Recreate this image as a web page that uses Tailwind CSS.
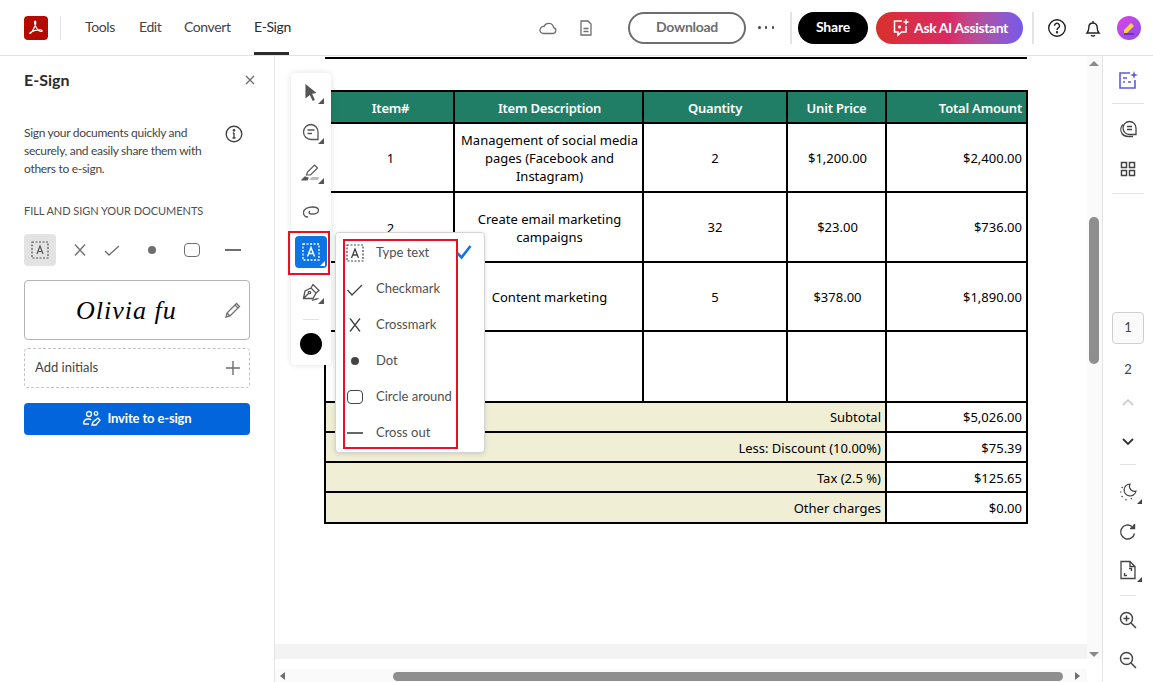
<!DOCTYPE html>
<html lang="en">
<head>
    <meta charset="UTF-8">
    <title>E-Sign</title>
    <script src="https://cdn.jsdelivr.net/npm/@tailwindcss/browser@4"></script>
</head>
<body class="w-[1153px] h-[682px] overflow-hidden bg-white font-['Lato','Noto_Sans',sans-serif] text-[#2c2c2c] flex flex-col">
    <!-- top bar -->
    <header class="h-[56px] shrink-0 border-b border-[#e3e3e3] flex items-center pl-[24px]">
        <div class="w-[24px] h-[24px] rounded-[4px] bg-[#b30b00] flex items-center justify-center">
            <svg width="17" height="17" viewBox="0 0 17 17" fill="none" stroke="#fff" stroke-width="1.2"><path d="M2 14.5c2-1 4-5 5.5-9 .5-2 .3-3.3-.4-3.3-.9 0-.8 2.500 1 6 1.500 2.600 3.500 4.300 5 4.300 1.500 0 1.500-1.500-.5-1.600-3-.2-7 .8-9.500 2.200-1 .6-1.500 1.200-1.100 1.400z"/></svg>
        </div>
        <div class="w-px h-[24px] bg-[#e3e3e3] ml-[12px]"></div>
        <nav class="flex h-full text-[14px] tracking-[-0.4px] text-[#444] ml-[24px]">
            <a class="leading-[54px] w-[54px]">Tools</a>
            <a class="leading-[54px] w-[45px]">Edit</a>
            <a class="leading-[54px] w-[70px]">Convert</a>
            <a class="leading-[54px] h-full w-[35px] border-b-[3px] border-[#2c2c2c] text-[#2c2c2c] whitespace-nowrap">E-Sign</a>
        </nav>
        <div class="flex items-center ml-[249px]">
            <svg width="20" height="20" viewBox="0 0 20 20" fill="none" stroke="#6e6e6e" stroke-width="1.300"><path d="M5 15.500h10a3 3 0 0 0 .6-5.900A5 5 0 0 0 6 8.500a3.500 3.500 0 0 0-1 7z"/></svg>
            <svg class="ml-[18px]" width="20" height="20" viewBox="0 0 20 20" fill="none" stroke="#6e6e6e" stroke-width="1.300"><path d="M5 3h7l3 3v11H5zM7.500 10.500h5M7.500 13.500h5"/></svg>
            <button class="ml-[32px] w-[118px] h-[32px] rounded-full border-2 border-[#6e6e6e] text-[14px] tracking-[-0.3px] leading-[26px] pb-[2px] font-bold text-[#6e6e6e]">Download</button>
            <span class="ml-[12px] w-[16px] flex justify-between">
                <i class="w-[2.500px] h-[2.500px] rounded-full bg-[#444]"></i><i class="w-[2.500px] h-[2.500px] rounded-full bg-[#444]"></i><i class="w-[2.500px] h-[2.500px] rounded-full bg-[#444]"></i>
            </span>
            <div class="w-[2px] h-[32px] bg-[#e3e3e3] ml-[16px]"></div>
            <button class="ml-[6px] w-[70px] h-[32px] pb-[2px] rounded-full bg-black text-white text-[14px] tracking-[-0.2px] font-bold">Share</button>
            <button class="ml-[8px] w-[147px] h-[32px] pb-[1px] rounded-full bg-gradient-to-r from-[#d9302a] via-[#d92a63] to-[#7457ee] text-white text-[14px] tracking-[-0.4px] font-bold flex items-center justify-center gap-[3px]">
                <svg width="20" height="20" viewBox="0 0 20 20" fill="none" stroke="#fff" stroke-width="1.500"><path d="M11 4H3.500v11H7v3l3.500-3H15V9"/><path d="M15 1.500l.9 2.600 2.600.9-2.600.9-.9 2.600-.9-2.600-2.600-.9 2.600-.9z" fill="#fff" stroke="none"/><path d="M8.500 8.500v3M7 10h3"/></svg>
                Ask AI Assistant
            </button>
            <div class="w-[2px] h-[32px] bg-[#e3e3e3] ml-[9px]"></div>
            <svg class="ml-[13px]" width="20" height="20" viewBox="0 0 20 20" fill="none" stroke="#222" stroke-width="1.400"><circle cx="10" cy="10" r="8.300"/><path d="M7.500 7.800a2.500 2.500 0 1 1 3.800 2.100c-.9.600-1.300 1-1.300 2"/><circle cx="10" cy="14.300" r=".5" fill="#222"/></svg>
            <svg class="ml-[16px]" width="20" height="20" viewBox="0 0 20 20" fill="none" stroke="#222" stroke-width="1.400"><path d="M4 15h12c-1.300-1.300-1.800-2.500-1.800-5.500 0-2.600-1.700-4.500-4.200-4.500S5.800 6.900 5.800 9.500C5.800 12.500 5.300 13.700 4 15zM8.200 17a2 2 0 0 0 3.600 0M10 3v2"/></svg>
            <div class="ml-[14px] w-[24px] h-[24px] rounded-full bg-gradient-to-br from-[#e040e8] to-[#8a4be8] flex items-center justify-center">
                <svg width="16" height="16" viewBox="0 0 16 16"><path d="M3 10l7-7 3 3-7 7H3z" fill="#f5d442"/><path d="M3 14h10" stroke="#5a2bb0" stroke-width="1.500"/></svg>
            </div>
        </div>
    </header>

    <div class="flex flex-1 min-h-0">
        <!-- left panel -->
        <aside class="w-[275px] shrink-0 border-r border-[#e3e3e3] px-[24px] pt-[13px]">
            <div class="flex items-center justify-between h-[22px]">
                <h1 class="text-[16px] font-bold">E-Sign</h1>
                <svg class="-mr-[5px]" width="10" height="10" viewBox="0 0 10 10" stroke="#6e6e6e" stroke-width="1.300"><path d="M1 1l8 8M9 1l-8 8"/></svg>
            </div>
            <div class="flex justify-between mt-[33px] pr-[7px]">
                <p class="text-[12px] tracking-[-0.3px] leading-[18px] text-[#444] w-[185px]">Sign your documents quickly and securely, and easily share them with others to e-sign.</p>
                <svg class="mt-[1px]" width="18" height="18" viewBox="0 0 18 18" fill="none" stroke="#444" stroke-width="1.400"><circle cx="9" cy="9" r="7.800"/><path d="M9 8v5M7.500 13h3M7.800 8H9" /><circle cx="9" cy="5.300" r=".7" fill="#444"/></svg>
            </div>
            <h2 class="text-[11px] tracking-[-0.05px] text-[#505050] mt-[25px] leading-[16px]">FILL AND SIGN YOUR DOCUMENTS</h2>
            <div class="flex items-center mt-[15px]">
                <div class="w-[32px] h-[32px] rounded-[4px] bg-[#e3e3e3] flex items-center justify-center">
                    <svg width="18" height="18" viewBox="0 0 18 18" fill="none"><rect x="1" y="1" width="16" height="16" stroke="#555" stroke-width="1.200" stroke-dasharray="2 1.500"/><path d="M6 13l3-8 3 8M7 10.500h4" stroke="#555" stroke-width="1.200"/></svg>
                </div>
                <svg class="ml-[16px]" width="16" height="16" viewBox="0 0 16 16" stroke="#6e6e6e" stroke-width="1.300" fill="none"><path d="M3 2.500l10 11M13 2.500l-10 11"/></svg>
                <svg class="ml-[16px]" width="16" height="16" viewBox="0 0 16 16" stroke="#6e6e6e" stroke-width="1.300" fill="none"><path d="M1 9l4 4 10-9"/></svg>
                <span class="ml-[28px] w-[8px] h-[8px] rounded-full bg-[#6e6e6e]"></span>
                <span class="ml-[28px] w-[16px] h-[14px] rounded-[4px] border-[1.500px] border-[#6e6e6e]"></span>
                <span class="ml-[25px] w-[16px] h-[1.500px] bg-[#6e6e6e]"></span>
            </div>
            <div class="mt-[14px] h-[60px] rounded-[4px] border border-[#b3b3b3] flex items-center relative">
                <span class="ml-[51px] font-['Liberation_Serif',serif] italic text-[26px] tracking-[1px] text-black">Olivia fu</span>
                <svg class="ml-auto mr-[7px]" width="18" height="18" viewBox="0 0 18 18" fill="none" stroke="#6e6e6e" stroke-width="1.300"><path d="M2 16l1-4L12.500 2.500l3 3L6 15zM3 12l3 3M11 4l3 3"/></svg>
            </div>
            <div class="mt-[8px] h-[40px] rounded-[4px] border border-dashed border-[#c4c4c4] flex items-center justify-between pl-[10px] pr-[9px]">
                <span class="text-[13px] text-[#444]">Add initials</span>
                <svg width="14" height="14" viewBox="0 0 14 14" stroke="#6e6e6e" stroke-width="1.400"><path d="M7 0v14M0 7h14"/></svg>
            </div>
            <button class="mt-[15px] w-full h-[32px] rounded-[4px] bg-[#0265dc] text-white text-[13px] tracking-[-0.15px] font-bold flex items-center justify-center gap-[5px]">
                <svg width="20" height="18" viewBox="0 0 20 18" fill="none" stroke="#fff" stroke-width="1.300"><circle cx="7" cy="4" r="2.500"/><circle cx="14" cy="3.500" r="1.800"/><path d="M1.500 14c0-3 2-5 5-5 1 0 2 .2 2.800.7M1.500 14H7"/><path d="M10 15l1-3 5-4 2 2-4 5z"/></svg>
                Invite to e-sign
            </button>
        </aside>

        <!-- document viewer -->
        <main class="flex-1 min-w-0 flex flex-col relative">
            <div class="flex-1 min-h-0 flex">
                <div class="flex-1 min-w-0 flex flex-col overflow-hidden">
                    <div class="flex-1 pl-[49px] font-['Noto_Sans',sans-serif] text-black text-[13px]">
                        <div class="ml-[1px] w-[702px] h-[2px] bg-black mt-[1px]"></div>
                        <table class="mt-[31px] w-[702px] table-fixed border-collapse">
                            <colgroup><col class="w-[129px]"><col class="w-[189px]"><col class="w-[144px]"><col class="w-[99px]"><col class="w-[141px]"></colgroup>
                            <thead>
                                <tr class="h-[32px] bg-[#217e66] text-white font-semibold tracking-[-0.2px]">
                                    <th class="border-2 border-black font-semibold pt-[3px] pl-[2px]">Item#</th>
                                    <th class="border-2 border-black font-semibold pt-[3px] pl-[2px]">Item Description</th>
                                    <th class="border-2 border-black font-semibold pt-[3px]">Quantity</th>
                                    <th class="border-2 border-black font-semibold pt-[3px]">Unit Price</th>
                                    <th class="border-2 border-black font-semibold pt-[3px] text-right pr-[4px]">Total Amount</th>
                                </tr>
                            </thead>
                            <tbody class="text-center leading-[18px]">
                                <tr class="h-[69px]">
                                    <td class="border-2 border-black pl-[2px]">1</td>
                                    <td class="border-2 border-black pl-[5px] pr-[3px]">Management of social media pages (Facebook and Instagram)</td>
                                    <td class="border-2 border-black">2</td>
                                    <td class="border-2 border-black pl-[2px]">$1,200.00</td>
                                    <td class="border-2 border-black text-right pr-[4px]">$2,400.00</td>
                                </tr>
                                <tr class="h-[70px]">
                                    <td class="border-2 border-black pl-[2px] pt-[2px]">2</td>
                                    <td class="border-2 border-black pl-[18px] pr-[16px] pt-[2px]">Create email marketing campaigns</td>
                                    <td class="border-2 border-black">32</td>
                                    <td class="border-2 border-black pl-[2px]">$23.00</td>
                                    <td class="border-2 border-black text-right pr-[4px]">$736.00</td>
                                </tr>
                                <tr class="h-[69px]">
                                    <td class="border-2 border-black"></td>
                                    <td class="border-2 border-black pl-[2px]">Content marketing</td>
                                    <td class="border-2 border-black">5</td>
                                    <td class="border-2 border-black pl-[2px]">$378.00</td>
                                    <td class="border-2 border-black text-right pr-[4px]">$1,890.00</td>
                                </tr>
                                <tr class="h-[71px]">
                                    <td class="border-2 border-black"></td>
                                    <td class="border-2 border-black"></td>
                                    <td class="border-2 border-black"></td>
                                    <td class="border-2 border-black"></td>
                                    <td class="border-2 border-black"></td>
                                </tr>
                                <tr class="h-[30px]">
                                    <td colspan="4" class="border-2 border-black bg-[#f0efd6] text-right pr-[4px]">Subtotal</td>
                                    <td class="border-2 border-black text-right pr-[4px]">$5,026.00</td>
                                </tr>
                                <tr class="h-[30px]">
                                    <td colspan="4" class="border-2 border-black bg-[#f0efd6] text-right pr-[4px] pt-[2px]">Less: Discount (10.00%)</td>
                                    <td class="border-2 border-black text-right pr-[4px] pt-[2px]">$75.39</td>
                                </tr>
                                <tr class="h-[30px]">
                                    <td colspan="4" class="border-2 border-black bg-[#f0efd6] text-right pr-[4px] pt-[2px]">Tax (2.5 %)</td>
                                    <td class="border-2 border-black text-right pr-[4px] pt-[2px]">$125.65</td>
                                </tr>
                                <tr class="h-[31px]">
                                    <td colspan="4" class="border-2 border-black bg-[#f0efd6] text-right pr-[4px]">Other charges</td>
                                    <td class="border-2 border-black text-right pr-[4px]">$0.00</td>
                                </tr>
                            </tbody>
                        </table>
                    </div>
                    <div class="h-[15px] shrink-0 bg-[#f3f3f3]"></div>
                </div>
                <!-- vertical scrollbar -->
                <div class="w-[15px] shrink-0 bg-[#fafafa] relative">
                    <span class="absolute left-[2px] top-[5px] w-0 h-0 border-x-[5px] border-x-transparent border-b-[5px] border-b-[#8a8a8a]"></span>
                    <span class="absolute left-[2px] top-[161px] w-[10px] h-[147px] rounded-full bg-[#8e8e8e]"></span>
                    <span class="absolute right-[3px] bottom-[2px] w-0 h-0 border-x-[5px] border-x-transparent border-t-[5px] border-t-[#8a8a8a]"></span>
                </div>
            </div>
            <!-- horizontal scrollbar -->
            <div class="h-[23px] shrink-0 relative">
                <div class="absolute left-0 right-[15px] top-[10px] bottom-0 bg-[#fafafa]"></div>
                <span class="absolute left-[5px] top-[13px] w-0 h-0 border-y-[4px] border-y-transparent border-r-[5px] border-r-[#6e6e6e]"></span>
                <span class="absolute left-[118px] top-[13px] w-[670px] h-[9px] rounded-full bg-[#8e8e8e]"></span>
                <span class="absolute left-[800px] top-[13px] w-0 h-0 border-y-[4px] border-y-transparent border-l-[5px] border-l-[#6e6e6e]"></span>
            </div>

            <!-- floating toolbar -->
            <div class="absolute left-[16px] top-[17px] w-[40px] h-[292px] bg-white rounded-[4px] shadow-[0_0_6px_rgba(0,0,0,0.12)] flex flex-col items-center">
                <div class="relative w-[32px] h-[39px] flex items-center justify-center">
                    <svg width="18" height="20" viewBox="0 0 16 18"><path d="M3 1l10 8-4 .7 2.500 5.500-2 1-2.500-5.500L3 14z" fill="#555"/></svg>
                    <span class="absolute right-[3px] bottom-[8px] w-0 h-0 border-l-[6px] border-l-transparent border-b-[6px] border-b-[#555]"></span>
                </div>
                <div class="relative w-[32px] h-[40px] flex items-center justify-center">
                    <svg width="18" height="18" viewBox="0 0 18 18" fill="none" stroke="#555" stroke-width="1.300"><path d="M9 1.500a7.500 7.500 0 1 0 0 15h7v-7A7.500 7.500 0 0 0 9 1.500zM5.500 7h7M5.500 10.500h4.500"/></svg>
                    <span class="absolute right-[3px] bottom-[8px] w-0 h-0 border-l-[6px] border-l-transparent border-b-[6px] border-b-[#555]"></span>
                </div>
                <div class="relative w-[32px] h-[40px] flex items-center justify-center">
                    <svg width="20" height="20" viewBox="0 0 20 20" fill="none" stroke="#555" stroke-width="1.200"><path d="M5.500 13l1-3 7-7 3 3-7 7z"/><path d="M1 18l3-3 3 1-1 2z" fill="#555"/><path d="M8 18h9l1-3h-7z" fill="#bbb" stroke="none"/></svg>
                    <span class="absolute right-[3px] bottom-[8px] w-0 h-0 border-l-[6px] border-l-transparent border-b-[6px] border-b-[#555]"></span>
                </div>
                <div class="w-[32px] h-[40px] flex items-center justify-center">
                    <svg width="18" height="14" viewBox="0 0 18 14" fill="none" stroke="#555" stroke-width="1.300"><path d="M6 12c-2.500 0-4.500-1.200-4.500-4.500C1.500 4 6 2 10.500 2c3.500 0 6 1 6 3.500S13 9 10 9 6 7.500 8 6"/></svg>
                </div>
                <div class="relative w-[32px] h-[32px] mt-[4px] rounded-[4px] bg-[#0d74e8] flex items-center justify-center">
                    <svg width="20" height="20" viewBox="0 0 20 20" fill="none"><rect x="2" y="2" width="16" height="16" stroke="#fff" stroke-width="1.300" stroke-dasharray="2 1.500"/><path d="M6.500 14.500l3.500-9 3.500 9M7.700 11.500h4.600" stroke="#fff" stroke-width="1.400"/></svg>
                    <span class="absolute right-[2px] bottom-[2px] w-0 h-0 border-l-[5px] border-l-transparent border-b-[5px] border-b-white"></span>
                </div>
                <div class="relative w-[32px] h-[40px] mt-[4px] flex items-center justify-center">
                    <svg width="20" height="20" viewBox="0 0 20 20" fill="none" stroke="#555" stroke-width="1.300"><path d="M2.500 16.500L4 9l6-3 5 5-3 5.500zM10 6l2-3.500 6 6-3 2.500M2.500 16.500l5-5"/><circle cx="8.500" cy="10.500" r="1.200"/><path d="M11 18.500c1-1.200 2-.2 3-1s2-.2 3.500-1"/></svg>
                    <span class="absolute right-[3px] bottom-[8px] w-0 h-0 border-l-[6px] border-l-transparent border-b-[6px] border-b-[#555]"></span>
                </div>
                <div class="w-[16px] h-px bg-[#e3e3e3] mt-[7px]"></div>
                <div class="w-[22px] h-[22px] rounded-full bg-black mt-[13px]"></div>
            </div>
            <!-- red box round the active tool -->
            <div class="absolute left-[13px] top-[175px] w-[42px] h-[44px] border-2 border-[#e81123]"></div>

            <!-- tool menu -->
            <div class="absolute left-[60px] top-[176px] w-[150px] h-[221px] bg-white rounded-[4px] border border-[#d5d5d5] shadow-[0_1px_4px_rgba(0,0,0,0.15)] pl-[10px] pt-[2px] text-[13px] text-[#505050]">
                <div class="absolute left-[7px] top-[6px] w-[115px] h-[210px] border-2 border-[#e81123]"></div>
                <ul>
                    <li class="h-[36px] flex items-center">
                        <svg class="w-[18px] h-[18px]" viewBox="0 0 18 18" fill="none"><rect x="1" y="1" width="16" height="16" stroke="#444" stroke-width="1.200" stroke-dasharray="2 1.500"/><path d="M5.500 14l3.500-9 3.500 9M6.700 11h4.600" stroke="#444" stroke-width="1.300"/></svg>
                        <span class="ml-[12px]">Type text</span>
                        <svg class="absolute left-[120px] top-[11px]" width="16" height="16" viewBox="0 0 16 16" fill="none" stroke="#1473e6" stroke-width="2.600"><path d="M1.500 9l4 4.500L14.500 2"/></svg>
                    </li>
                    <li class="h-[36px] flex items-center">
                        <svg class="w-[18px] h-[18px]" viewBox="0 0 18 18" fill="none" stroke="#444" stroke-width="1.300"><path d="M1.500 10l4.500 5 10-10"/></svg>
                        <span class="ml-[12px]">Checkmark</span>
                    </li>
                    <li class="h-[36px] flex items-center">
                        <svg class="w-[18px] h-[18px]" viewBox="0 0 18 18" fill="none" stroke="#444" stroke-width="1.300"><path d="M4 2.500l10 13M14 2.500l-10 13"/></svg>
                        <span class="ml-[12px]">Crossmark</span>
                    </li>
                    <li class="h-[36px] flex items-center">
                        <span class="w-[18px] flex justify-center"><i class="w-[8px] h-[8px] rounded-full bg-[#444]"></i></span>
                        <span class="ml-[12px]">Dot</span>
                    </li>
                    <li class="h-[36px] flex items-center">
                        <span class="w-[16px] h-[14px] ml-[1px] mr-[1px] rounded-[4px] border-[1.500px] border-[#444]"></span>
                        <span class="ml-[12px] whitespace-nowrap">Circle around</span>
                    </li>
                    <li class="h-[36px] flex items-center">
                        <span class="w-[16px] h-[1.500px] ml-[1px] mr-[1px] bg-[#666]"></span>
                        <span class="ml-[12px]">Cross out</span>
                    </li>
                </ul>
            </div>
        </main>

        <!-- right rail -->
        <aside class="w-[51px] shrink-0 border-l border-[#e3e3e3] flex flex-col items-center pt-[14px]">
            <svg width="22" height="22" viewBox="0 0 22 22" fill="none" stroke="#5c5ce0" stroke-width="1.600"><path d="M13 3H3v15h15v-8"/><path d="M6 8h4M6 12h2M11 12h3" /><path d="M17 1l1 3 3 1-3 1-1 3-1-3-3-1 3-1z" fill="#5c5ce0" stroke="none"/></svg>
            <div class="w-[32px] h-px bg-[#e3e3e3] mt-[11px]"></div>
            <svg class="mt-[15px]" width="20" height="20" viewBox="0 0 20 20" fill="none" stroke="#444" stroke-width="1.300"><path d="M11.500 2.500a6.500 6.500 0 0 0 0 13H18V9a6.500 6.500 0 0 0-6.500-6.500zM9 7.500h5M9 10.500h5"/><path d="M5 5.500a7 7 0 0 0-1 9c1.500 2 3.500 3 6 3h5"/></svg>
            <svg class="mt-[22px]" width="16" height="16" viewBox="0 0 16 16" fill="none" stroke="#444" stroke-width="1.500"><rect x="1.500" y="1.500" width="5" height="5"/><rect x="9.500" y="1.500" width="5" height="5"/><rect x="1.500" y="9.500" width="5" height="5"/><rect x="9.500" y="9.500" width="5" height="5"/></svg>
            <div class="w-[32px] h-px bg-[#e3e3e3] mt-[16px]"></div>
            <div class="mt-[118px] w-[32px] h-[32px] rounded-[4px] border border-[#cfcfcf] bg-[#fafafa] flex items-center justify-center text-[13px] text-[#444]">1</div>
            <div class="h-[18px] mt-[16px] text-[13px] leading-[18px] text-[#444]">2</div>
            <svg class="mt-[20px]" width="12" height="8" viewBox="0 0 12 8" fill="none" stroke="#d0d0d0" stroke-width="1.800"><path d="M1 7l5-5 5 5"/></svg>
            <svg class="mt-[32px]" width="12" height="8" viewBox="0 0 12 8" fill="none" stroke="#333" stroke-width="1.800"><path d="M1 1l5 5 5-5"/></svg>
            <div class="w-[16px] h-px bg-[#e3e3e3] mt-[18px]"></div>
            <div class="relative w-[32px] h-[24px] mt-[15px] flex items-center justify-center">
                <svg width="20" height="20" viewBox="0 0 20 20" fill="none" stroke="#444" stroke-width="1.200"><path d="M12 2a6 6 0 1 0 6 7 5 5 0 0 1-6-7z"/><path d="M2 10h2M3.500 5l1.500 1M3.500 15l1.500-1M8 17v2M13 16l1 1.500" stroke-dasharray="1.500 1"/></svg>
                <span class="absolute right-[2px] bottom-0 w-0 h-0 border-l-[5px] border-l-transparent border-b-[5px] border-b-[#444]"></span>
            </div>
            <svg class="mt-[19px]" width="18" height="18" viewBox="0 0 18 18" fill="none" stroke="#444" stroke-width="1.400"><path d="M15.500 10.500A7 7 0 1 1 13 3.500"/><path d="M15.500 1v4.500H11" fill="#444"/></svg>
            <div class="relative w-[32px] h-[22px] mt-[18px] flex items-center justify-center">
                <svg width="18" height="20" viewBox="0 0 18 20" fill="none" stroke="#444" stroke-width="1.300"><path d="M2 1.500h9l5 5v12H2zM11 1.500v5h5"/><path d="M5.500 13v2.500H8M12.500 11V8.500H10"/></svg>
                <span class="absolute right-[2px] bottom-[-1px] w-0 h-0 border-l-[5px] border-l-transparent border-b-[5px] border-b-[#444]"></span>
            </div>
            <div class="w-[16px] h-px bg-[#e3e3e3] mt-[14px]"></div>
            <svg class="mt-[15px]" width="18" height="18" viewBox="0 0 18 18" fill="none" stroke="#444" stroke-width="1.500"><circle cx="7.500" cy="7.500" r="6"/><path d="M12 12l5 5M4.500 7.500h6M7.500 4.500v6"/></svg>
            <svg class="mt-[22px]" width="18" height="18" viewBox="0 0 18 18" fill="none" stroke="#444" stroke-width="1.500"><circle cx="7.500" cy="7.500" r="6"/><path d="M12 12l5 5M4.500 7.500h6"/></svg>
        </aside>
    </div>
</body>
</html>
